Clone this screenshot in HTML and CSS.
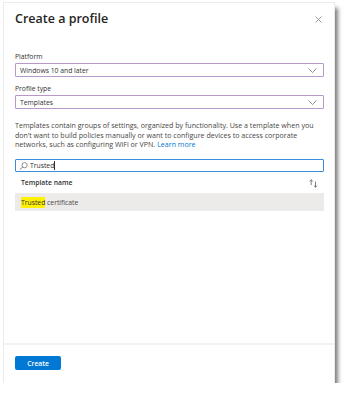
FILE: index.html
```html
<!DOCTYPE html>
<html>
<head>
<meta charset="utf-8">
<link rel="stylesheet" href="styles.css">
</head>
<body>
<div class="panel">
  <div class="header">
    <h1 class="title">Create a profile</h1>
    <svg class="close" width="7" height="7" viewBox="0 0 7 7"><path d="M0.5 0.5L6.5 6.5M6.5 0.5L0.5 6.5" stroke="#8a8886" stroke-width="0.8" fill="none"/></svg>
  </div>
  <div class="content">
    <div class="label label-first">Platform</div>
    <div class="dropdown">
      <span>Windows 10 and later</span>
      <svg class="chev" width="9" height="5" viewBox="0 0 9 5"><path d="M0.5 0.5L4.5 4.5L8.5 0.5" stroke="#605e5c" stroke-width="0.7" fill="none"/></svg>
    </div>
    <div class="label">Profile type</div>
    <div class="dropdown">
      <span>Templates</span>
      <svg class="chev" width="9" height="5" viewBox="0 0 9 5"><path d="M0.5 0.5L4.5 4.5L8.5 0.5" stroke="#605e5c" stroke-width="0.7" fill="none"/></svg>
    </div>
    <p class="desc">Templates contain groups of settings, organized by functionality. Use a template when you<br>don’t want to build policies manually or want to configure devices to access corporate<br>networks, such as configuring WiFi or VPN. <a class="link">Learn more</a></p>
    <div class="search">
      <svg class="search-icon" width="9" height="8" viewBox="0 0 9 8"><circle cx="5.6" cy="3.2" r="2.6" stroke="#605e5c" stroke-width="0.7" fill="none"/><path d="M3.7 5.1L0.8 7.6" stroke="#605e5c" stroke-width="0.8"/></svg>
      <span class="search-text">Trusted</span><span class="caret"></span>
    </div>
    <div class="thead">
      <span>Template name</span>
      <svg class="sort" width="9" height="9" viewBox="0 0 9 9"><path d="M2.2 6V0.8M0.6 2.4L2.2 0.8L3.8 2.4" stroke="#605e5c" stroke-width="0.8" fill="none"/><path d="M6.5 2.5V8.2M4.9 6.6L6.5 8.2L8.1 6.6" stroke="#605e5c" stroke-width="0.8" fill="none"/></svg>
    </div>
    <div class="row"><mark class="hl">Trusted</mark> certificate</div>
  </div>
  <div class="footer">
    <button class="btn">Create</button>
  </div>
</div>
</body>
</html>
```

FILE: styles.css
```css
html, body {
  margin: 0;
  padding: 0;
  background: #ffffff;
}
body {
  padding: 3px 0 0 4px;
  font-family: "Open Sans", "Noto Sans", sans-serif;
  color: #323130;
}
.panel {
  width: 330px;
  height: 380px;
  background: #ffffff;
  box-shadow: 0 0 0 1px #ebebeb, 4px 5px 4px rgba(0, 0, 0, 0.5);
  display: flex;
  flex-direction: column;
  box-sizing: border-box;
}
.header {
  display: flex;
  justify-content: space-between;
  align-items: flex-start;
  padding: 8px 12px 0 11px;
}
.title {
  margin: 0;
  font-size: 12.5px;
  line-height: 16px;
  font-weight: 600;
  color: #252423;
}
.close {
  margin-top: 5px;
}
.content {
  flex: 1;
  padding: 0 10px 0 11px;
}
.label {
  font-size: 6.8px;
  line-height: 10px;
  color: #323130;
  margin-top: 7px;
  margin-bottom: 1px;
}
.label-first {
  margin-top: 25px;
}
.dropdown {
  height: 14px;
  box-sizing: border-box;
  border: 1px solid #b897c9;
  border-radius: 1px;
  display: flex;
  align-items: center;
  justify-content: space-between;
  padding: 0 6px 0 4px;
  font-size: 6.8px;
  color: #323130;
}
.chev {
  display: block;
}
.desc {
  margin: 12px 0 0;
  font-size: 7.1px;
  line-height: 9.7px;
  color: #484644;
  white-space: nowrap;
}
.link {
  color: #0078d4;
}
.search {
  margin-top: 9px;
  height: 13px;
  box-sizing: border-box;
  border: 1px solid #3a8fd9;
  border-radius: 1px;
  display: flex;
  align-items: center;
  padding-left: 3px;
  font-size: 6.8px;
  color: #323130;
}
.search-icon {
  display: block;
  margin-right: 2px;
}
.caret {
  width: 0.6px;
  height: 9px;
  background: #323130;
}
.thead {
  display: flex;
  justify-content: space-between;
  align-items: center;
  height: 21px;
  padding: 0 6px 0 6px;
  font-size: 6.8px;
  font-weight: 600;
  color: #323130;
}
.sort {
  display: block;
  margin-top: 2px;
}
.row {
  height: 18px;
  background: #edebe9;
  display: flex;
  align-items: center;
  padding-left: 6px;
  font-size: 6.8px;
  color: #484644;
  white-space: pre;
}
.hl {
  background: #fff100;
  color: #323130;
  padding: 1px 0;
}
.footer {
  border-top: 2px solid #f3f2f1;
  padding: 11px 11px 13px;
}
.btn {
  display: block;
  width: 46px;
  height: 14px;
  background: #0078d4;
  color: #ffffff;
  border: none;
  border-radius: 2px;
  font-family: "Open Sans", "Noto Sans", sans-serif;
  font-size: 6.8px;
  font-weight: 600;
  padding: 0;
}
```
